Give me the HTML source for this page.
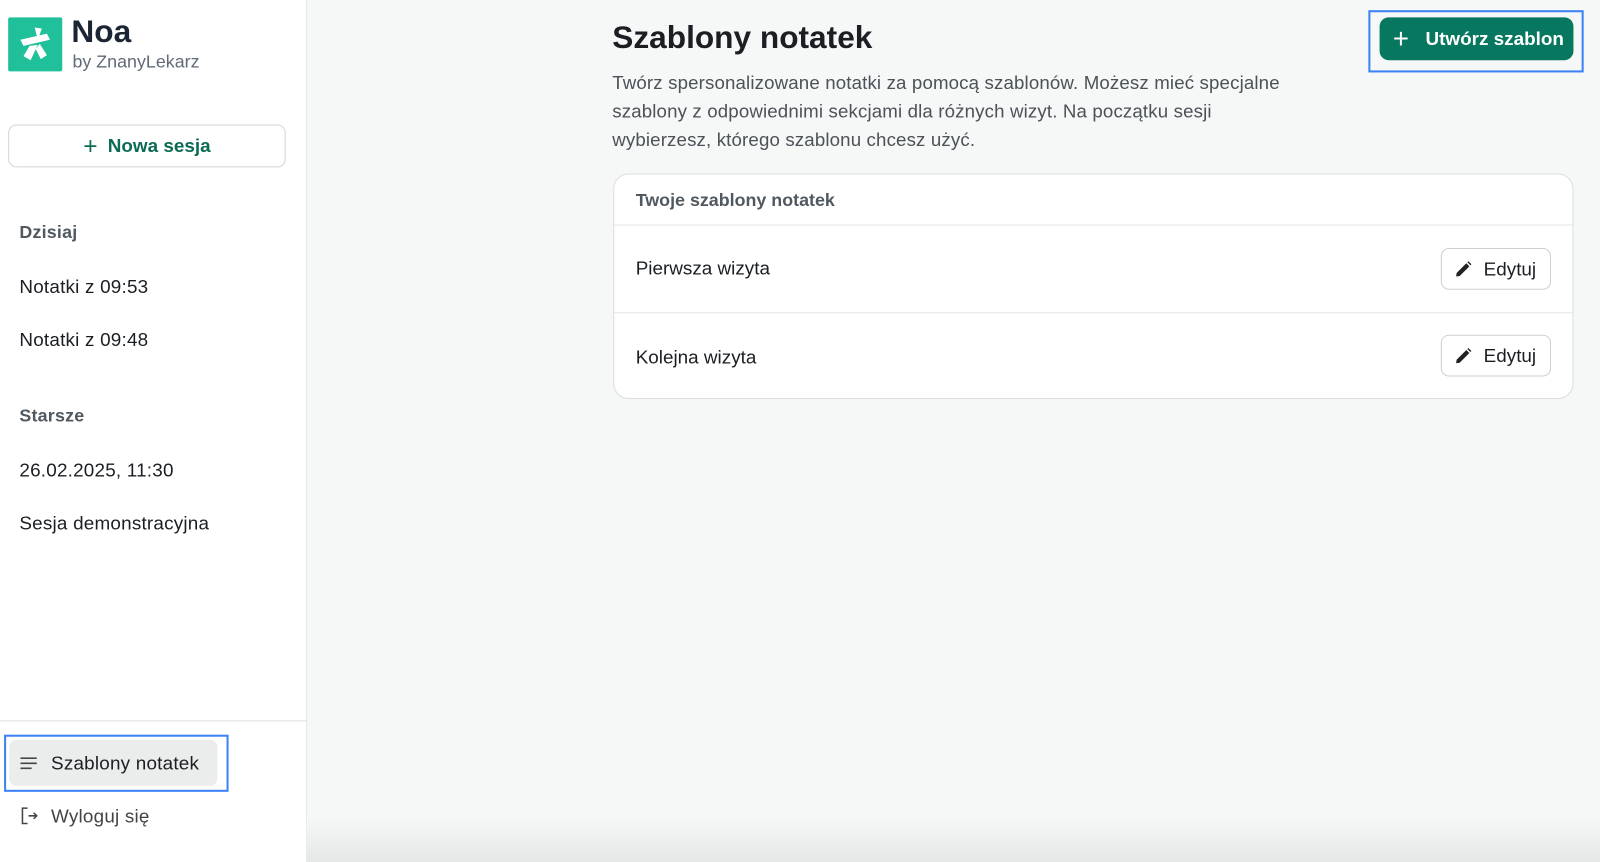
<!DOCTYPE html>
<html><head><meta charset="utf-8"><style>
*{box-sizing:border-box;margin:0;padding:0}
body{width:1600px;height:845px;overflow:hidden;font-family:"Liberation Sans",sans-serif;background:#f6f7f7;position:relative;color:#1b1f23}
#w{position:absolute;left:0;top:0;width:1568px;height:828px;transform:scale(1.0204);transform-origin:0 0}
.side{position:absolute;left:0;top:0;width:301px;height:845px;background:#fff;border-right:1px solid #e6e8e8}
.logo{position:absolute;left:8px;top:17px;width:53px;height:53px;background:#1fc09a;border-radius:2px}
.noa{position:absolute;left:70px;top:13px;font-size:31px;font-weight:bold;color:#1c2533}
.by{position:absolute;left:71px;top:50px;font-size:17.5px;color:#606a75}
.nb{position:absolute;left:8px;top:122px;width:272px;height:42px;border:1px solid #d4d6d6;border-radius:8px;text-align:center;line-height:40px;font-size:18.5px;font-weight:bold;color:#0c6b55}
.it{position:absolute;left:19px;font-size:18.5px;color:#1b1f23;letter-spacing:.2px}
.hd{font-weight:bold;color:#505860;font-size:17.5px}
.div{position:absolute;left:0;top:706px;width:301px;border-top:1px solid #dcdede}
.sel{position:absolute;left:4px;top:720px;width:220px;height:56px;border:2px solid #3b82f6}
.selin{position:absolute;left:9px;top:725px;width:204px;height:45px;background:#ebecec;border-radius:7px}
h1{position:absolute;left:600px;top:19px;font-size:31px;font-weight:bold;color:#1b1f23}
.desc{position:absolute;left:600px;top:67px;width:710px;font-size:18.3px;letter-spacing:.15px;line-height:28px;color:#4b5258}
.cb{position:absolute;left:1341px;top:10px;width:211px;height:61px;border:2px solid #3b82f6}
.cbi{position:absolute;left:1352px;top:17px;width:190px;height:42px;background:#07775f;border-radius:9px;color:#fff;font-size:18.5px;font-weight:bold;line-height:42px;padding-left:45px}
.card{position:absolute;left:601px;top:170px;width:941px;height:221px;background:#fff;border:1px solid #dcdede;border-radius:15px;overflow:hidden}
.row{position:absolute;left:0;width:100%;border-top:1px solid #e4e6e6}
.rt{position:absolute;left:21px;font-size:18.5px}
.ed{position:absolute;right:21px;width:108px;height:41px;border:1px solid #ccd0d0;border-radius:8px;font-size:18.5px;line-height:39px;padding-left:41px;background:#fff}
.ed svg{position:absolute;left:12px;top:11px}
.shadow{position:absolute;left:301px;top:800px;width:1299px;height:45px;background:linear-gradient(#f6f7f7,#e6e7e7)}
</style></head><body><div id="w">
<div class="side">
<div class="logo"><svg width="53" height="53" viewBox="0 0 53 53"><path d="M12 22 L38 16 L41 22 L15 28Z M26 10 L33 11 L29 22Z M21 28 L29 27 L22 42 L15 38Z M31 26 L38 37 L32 41 L27 31Z" fill="#fff"/></svg></div>
<div class="noa">Noa</div><div class="by">by ZnanyLekarz</div>
<div class="nb"><span style="font-weight:normal;font-size:24px;vertical-align:-2px;margin-right:10px">+</span>Nowa sesja</div>
<div class="it hd" style="top:217px">Dzisiaj</div>
<div class="it" style="top:270px">Notatki z 09:53</div>
<div class="it" style="top:322px">Notatki z 09:48</div>
<div class="it hd" style="top:397px">Starsze</div>
<div class="it" style="top:450px">26.02.2025, 11:30</div>
<div class="it" style="top:502px">Sesja demonstracyjna</div>
<div class="div"></div>
<div class="selin"></div><div class="sel"></div>
<svg style="position:absolute;left:20px;top:742px" width="17" height="12"><path d="M0 1H16M0 6H16M0 11H11" stroke="#444" stroke-width="1.6"/></svg>
<div class="it" style="left:50px;top:737px">Szablony notatek</div>
<svg style="position:absolute;left:20px;top:791px" width="18" height="17"><path d="M7 1H2V16H7M8 8.5H16M13 5.5L16 8.5L13 11.5" stroke="#444" stroke-width="1.5" fill="none"/></svg>
<div class="it" style="left:50px;top:789px;color:#444">Wyloguj się</div>
</div>
<div class="shadow"></div>
<h1>Szablony notatek</h1>
<div class="desc">Twórz spersonalizowane notatki za pomocą szablonów. Możesz mieć specjalne<br>szablony z odpowiednimi sekcjami dla różnych wizyt. Na początku sesji<br>wybierzesz, którego szablonu chcesz użyć.</div>
<div class="cb"></div>
<div class="cbi"><span style="position:absolute;left:13px;font-weight:normal;font-size:27px">+</span>Utwórz szablon</div>
<div class="card">
<div class="rt" style="top:15px;font-weight:bold;color:#505860;font-size:17.5px">Twoje szablony notatek</div>
<div class="row" style="top:49px;height:86px"><div class="rt" style="top:31px">Pierwsza wizyta</div><div class="ed" style="top:22px"><svg width="18" height="18"><path d="M2 16L2.5 12.5L12 3L15 6L5.5 15.5Z M13 2L14 1L17 4L16 5Z" fill="#222"/></svg>Edytuj</div></div>
<div class="row" style="top:135px;height:86px"><div class="rt" style="top:32px">Kolejna wizyta</div><div class="ed" style="top:21px"><svg width="18" height="18"><path d="M2 16L2.5 12.5L12 3L15 6L5.5 15.5Z M13 2L14 1L17 4L16 5Z" fill="#222"/></svg>Edytuj</div></div>
</div>
</div></body></html>
